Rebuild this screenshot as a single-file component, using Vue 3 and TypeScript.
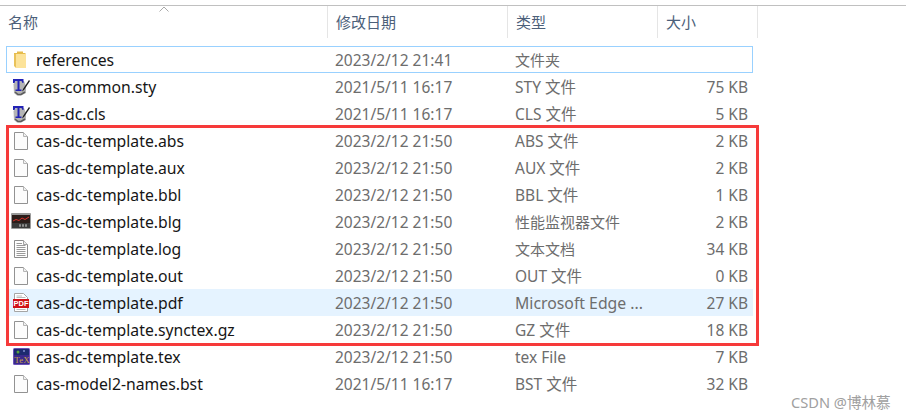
<template>
  <div class="explorer">
    <div class="header">
      <svg class="sort-arrow" width="10" height="6" viewBox="0 0 10 6">
        <path d="M0.5 5.5 L5 1 L9.5 5.5" fill="none" stroke="#a9a9a9" stroke-width="1" />
      </svg>
      <div v-for="col in columns" :key="col" class="header-cell">{{ col }}</div>
    </div>
    <div class="rows">
      <div
        v-for="file in files"
        :key="file.name"
        class="row"
        :class="{ focused: file.state === 'focused', hovered: file.state === 'hovered' }"
      >
        <div class="icon">
          <svg width="16" height="18" viewBox="0 0 16 18">
            <!-- folder -->
            <template v-if="file.icon === 'folder'">
              <path d="M1 2 H4 V0.5 H10 V2 H12.5 V15 H1 Z" fill="#e6bc4c" />
              <path d="M3 3 H13 V17 H3 Z" fill="#fce39a" />
              <path d="M1 3 L3 3 V17 L1 15 Z" fill="#e9c25a" />
            </template>
            <!-- tex editor -->
            <template v-else-if="file.icon === 'tex'">
              <path d="M0.5 6 L3 3 H11 L13 8 V15 L8 17.5 H4 L1 15 Z" fill="#b4b4b4" />
              <path d="M2 14 L5 16.5 H8 L12 14" fill="none" stroke="#5c5c5c" stroke-width="1.5" />
              <path d="M0 1 H10.5 V5 H9.5 L8.5 3 H6.5 V11.5 H8.5 V13 H2.5 V11.5 H4.5 V3 H2.5 L1.5 5 H0 Z" fill="#2323b5" />
              <path d="M9 13.5 L10 11 L16 2 L17 3 L11 12 Z" fill="#1c1c1c" />
            </template>
            <!-- performance monitor -->
            <template v-else-if="file.icon === 'blg'">
              <rect x="-2" y="0" width="20" height="16" rx="1" fill="#9a9a9a" />
              <rect x="-1" y="2" width="18" height="8" fill="#2b1d1a" />
              <path d="M0 8 L3 6.5 L6 7.5 L9 5 L12 6.5 L16 4" fill="none" stroke="#d8342c" stroke-width="1" />
              <rect x="-1" y="10" width="18" height="5" fill="#3a3a3a" />
              <path d="M6 12.5 H8 M9 12.5 H11 M12 12.5 H14" stroke="#8e8e8e" stroke-width="2.5" />
            </template>
            <!-- text document -->
            <template v-else-if="file.icon === 'log'">
              <path d="M1.5 0.5 H10.5 L14.5 4.5 V17.5 H1.5 Z" fill="#fff" stroke="#8d8d8d" />
              <path d="M10.5 0.5 V4.5 H14.5" fill="#eee" stroke="#a5a5a5" />
              <path d="M3.5 3.5 H9 M3.5 5.5 H12.5 M3.5 7.5 H12.5 M3.5 9.5 H12.5 M3.5 11.5 H12.5 M3.5 13.5 H12.5 M3.5 15.5 H12.5" stroke="#9a9a9a" />
            </template>
            <!-- pdf -->
            <template v-else-if="file.icon === 'pdf'">
              <path d="M1.5 -0.5 H10.5 L14.5 3.5 V17.5 H1.5 Z" fill="#fff" stroke="#a5a5a5" />
              <path d="M3.5 2 H9 M3.5 3.5 H12.5 M3.5 15.5 H12.5" stroke="#bbb" />
              <rect x="0" y="5" width="16" height="9" fill="#d01218" />
              <text x="8" y="12.3" class="pdf-label">PDF</text>
            </template>
            <!-- texstudio source -->
            <template v-else-if="file.icon === 'texstudio'">
              <rect x="0" y="0" width="17" height="17" rx="1.5" fill="#6a52b8" />
              <rect x="1" y="1" width="15" height="15" fill="#3a2a8c" />
              <rect x="1" y="1" width="15" height="6" fill="#1c2a70" />
              <circle cx="5" cy="4" r="1.5" fill="#59a33f" />
              <circle cx="11" cy="3" r="1" fill="#7f8fd0" />
              <text x="9" y="14.5" class="tex-label">TeX</text>
            </template>
            <!-- blank file -->
            <template v-else>
              <path d="M1.5 0.5 H10.5 L14.5 4.5 V17.5 H1.5 Z" fill="#fcfcfc" stroke="#929292" />
              <path d="M10.5 0.5 V4.5 H14.5" fill="#f0f0f0" stroke="#b5b5b5" />
            </template>
          </svg>
        </div>
        <div class="name">{{ file.name }}</div>
        <div class="meta">{{ file.date }}</div>
        <div class="meta" :class="{ cjk: isCjkOnly(file.type), wide: file.type.startsWith('Microsoft') }">{{ file.type }}</div>
        <div class="meta size">{{ file.size }}</div>
      </div>
    </div>
    <div class="red-box"></div>
    <div class="watermark">CSDN @博林慕</div>
  </div>
</template>

<script setup lang="ts">
  interface FileRow {
    name: string;
    date: string;
    type: string;
    size: string;
    icon: string;
    state?: string;
  }

  const columns = ['名称', '修改日期', '类型', '大小'];

  const files: FileRow[] = [
    { name: 'references', date: '2023/2/12 21:41', type: '文件夹', size: '', icon: 'folder', state: 'focused' },
    { name: 'cas-common.sty', date: '2021/5/11 16:17', type: 'STY 文件', size: '75 KB', icon: 'tex' },
    { name: 'cas-dc.cls', date: '2021/5/11 16:17', type: 'CLS 文件', size: '5 KB', icon: 'tex' },
    { name: 'cas-dc-template.abs', date: '2023/2/12 21:50', type: 'ABS 文件', size: '2 KB', icon: 'file' },
    { name: 'cas-dc-template.aux', date: '2023/2/12 21:50', type: 'AUX 文件', size: '2 KB', icon: 'file' },
    { name: 'cas-dc-template.bbl', date: '2023/2/12 21:50', type: 'BBL 文件', size: '1 KB', icon: 'file' },
    { name: 'cas-dc-template.blg', date: '2023/2/12 21:50', type: '性能监视器文件', size: '2 KB', icon: 'blg' },
    { name: 'cas-dc-template.log', date: '2023/2/12 21:50', type: '文本文档', size: '34 KB', icon: 'log' },
    { name: 'cas-dc-template.out', date: '2023/2/12 21:50', type: 'OUT 文件', size: '0 KB', icon: 'file' },
    { name: 'cas-dc-template.pdf', date: '2023/2/12 21:50', type: 'Microsoft Edge ...', size: '27 KB', icon: 'pdf', state: 'hovered' },
    { name: 'cas-dc-template.synctex.gz', date: '2023/2/12 21:50', type: 'GZ 文件', size: '18 KB', icon: 'file' },
    { name: 'cas-dc-template.tex', date: '2023/2/12 21:50', type: 'tex File', size: '7 KB', icon: 'texstudio' },
    { name: 'cas-model2-names.bst', date: '2021/5/11 16:17', type: 'BST 文件', size: '32 KB', icon: 'file' },
  ];

  const isCjkOnly = (text: string): boolean => /^[^\x00-\x7f]+$/.test(text);
</script>

<style scoped>
  .explorer {
    position: relative;
    width: 906px;
    height: 418px;
    overflow: hidden;
    background: #fff;
    font-family: 'Noto Sans', 'Noto Sans CJK SC', sans-serif;
    font-size: 15.5px;
  }

  .header {
    position: relative;
    display: grid;
    grid-template-columns: 328px 180px 150px 100px;
    height: 32px;
    margin-top: 5px;
    border-top: 1px solid #c0c0c0;
    color: #4c607a;
    font-size: 15px;
  }

  .sort-arrow {
    position: absolute;
    left: 159px;
    top: 0;
  }

  .header-cell {
    padding-left: 8px;
    line-height: 32px;
    border-right: 1px solid #e5e5e5;
  }

  .rows {
    margin: 8px 0 0 6px;
    width: 747px;
  }

  .row {
    display: grid;
    grid-template-columns: 30px 299px 180px 143px 90px;
    height: 27px;
    align-items: center;
    color: #6d6d6d;
  }

  .row.focused {
    outline: 1px solid #99d1ff;
    outline-offset: -1px;
  }

  .row.hovered {
    background: #e5f3ff;
  }

  .icon {
    display: flex;
    justify-content: center;
  }

  .icon svg {
    overflow: visible;
  }

  .name {
    color: #161616;
    font-size: 15.75px;
    white-space: nowrap;
  }

  .meta {
    white-space: nowrap;
  }

  .meta.cjk {
    font-size: 15px;
  }

  .meta.wide {
    font-size: 15.8px;
  }

  .size {
    text-align: right;
  }

  .pdf-label {
    fill: #fff;
    font-family: 'Liberation Sans', sans-serif;
    font-size: 7.5px;
    font-weight: 700;
    text-anchor: middle;
  }

  .tex-label {
    fill: #c9a24a;
    font-family: 'Liberation Serif', serif;
    font-size: 9px;
    text-anchor: middle;
  }

  .red-box {
    position: absolute;
    left: 6px;
    top: 125px;
    width: 753px;
    height: 221px;
    box-sizing: border-box;
    border: 3px solid #f63a3a;
  }

  .watermark {
    position: absolute;
    left: 791px;
    top: 391px;
    color: #a0a0a0;
    font-size: 14.6px;
    white-space: nowrap;
  }
</style>
